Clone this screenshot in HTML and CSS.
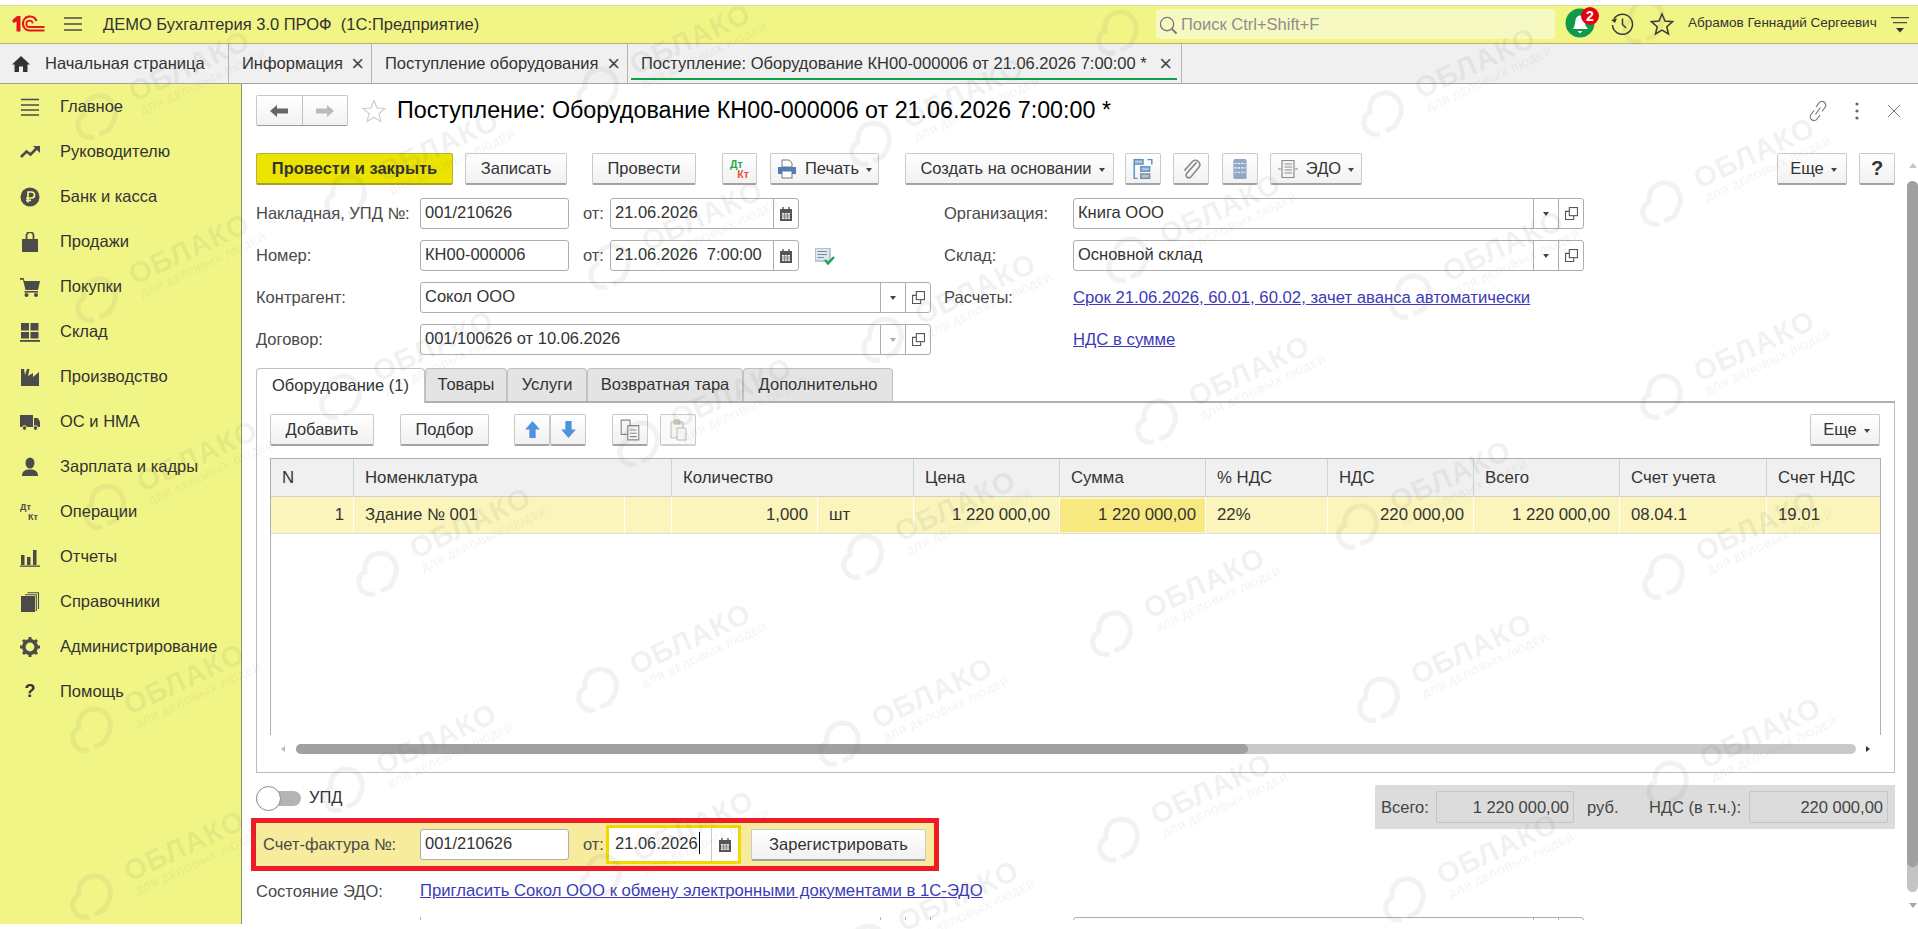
FILE: index.html
```html
<!DOCTYPE html>
<html lang="ru">
<head>
  <meta charset="UTF-8" />
  <meta name="viewport" content="width=device-width, initial-scale=1.0" />
  <title>ДЕМО Бухгалтерия 3.0 ПРОФ</title>
  <link rel="stylesheet" href="styles.css">
</head>

<body>
  <header class="topbar">
    <svg class="logo" viewBox="0 0 34 17" fill="none" stroke="#e8161b">
      <path d="M1 5.5 L6 1 H9.5 V16.5 H5.5 V6.5 L2.5 8 Z" fill="#e8161b" stroke="none" />
      <path d="M33.5 15.5 H18.5 A7 7 0 1 1 25.5 6" stroke-width="2.2" />
      <path d="M33.5 12 H18.5 A3.2 3.2 0 1 1 21.7 8.3" stroke-width="1.8" />
    </svg>
    <svg class="burger" viewBox="0 0 18 14" stroke="#4b4b4b" stroke-width="1.4">
      <path d="M0 1 H18 M0 7 H18 M0 13 H18" />
    </svg>
    <span class="app-title">ДЕМО Бухгалтерия 3.0 ПРОФ&nbsp; (1С:Предприятие)</span>
    <div class="search">
      <svg class="search-icon" viewBox="0 0 20 20" fill="none" stroke="#777" stroke-width="1.4">
        <circle cx="8.5" cy="8.5" r="7" />
        <path d="M13.5 13.5 L18.5 18.5" stroke-width="2" />
      </svg>
      <span>Поиск Ctrl+Shift+F</span>
    </div>
    <div class="bell">
      <svg viewBox="0 0 30 30">
        <circle cx="15" cy="15" r="14.5" fill="#0e9a48" />
        <path d="M8 21 C10 18 10 15 10.5 12 C11 9 13 7.5 15 7.5 C17 7.5 19 9 19.5 12 C20 15 20 18 23 21 Z" fill="#fff" />
        <path d="M12.5 23 H17.5 L15 25.5 Z" fill="#fff" />
      </svg>
      <span class="badge">2</span>
    </div>
    <svg class="top-icon history" viewBox="0 0 24 24" fill="none" stroke="#3a3a3a" stroke-width="1.5">
      <path d="M4 7 A10 10 0 1 1 2.5 13" />
      <path d="M1 8 L5 11 L7 6.5 Z" fill="#3a3a3a" stroke="none" />
      <path d="M12.5 6.5 V12.5 L16 16" />
    </svg>
    <svg class="top-icon fav" viewBox="0 0 24 24" fill="none" stroke="#3a3a3a" stroke-width="1.5">
      <path d="M12 2 L15 9 L22.5 9.7 L16.8 14.7 L18.5 22 L12 18.2 L5.5 22 L7.2 14.7 L1.5 9.7 L9 9 Z" />
    </svg>
    <span class="user-name">Абрамов Геннадий Сергеевич</span>
    <svg class="user-menu" viewBox="0 0 18 16">
      <path d="M0 .6 H18 M2 5.6 H16" stroke="#4b4b4b" stroke-width="1.2" />
      <path d="M5 11 H13 L9 15.5 Z" fill="#333" />
    </svg>
  </header>

  <nav class="tabsbar">
    <div class="page-tab home-tab">
      <svg class="home-icon" viewBox="0 0 18 16"><path d="M9 0 L18 8.5 H15.5 V16 H11 V10.5 H7 V16 H2.5 V8.5 H0 Z" fill="#333" /></svg>
      <span>Начальная страница</span>
    </div>
    <div class="page-tab info-tab"><span>Информация</span><i class="tab-close">×</i></div>
    <div class="page-tab list-tab"><span>Поступление оборудования</span><i class="tab-close">×</i></div>
    <div class="page-tab doc-tab active"><span>Поступление: Оборудование КН00-000006 от 21.06.2026 7:00:00 *</span><i class="tab-close">×</i></div>
  </nav>

  <div class="layout">
    <aside class="sidebar">
      <a class="nav-item">
        <svg viewBox="0 0 20 20" stroke="#4b4b4b" stroke-width="1.5"><path d="M1 2.5 H19 M1 8 H19 M1 13 H19 M1 18 H19" /></svg>
        Главное
      </a>
      <a class="nav-item">
        <svg viewBox="0 0 20 20" fill="none" stroke="#4b4b4b" stroke-width="2.6"><path d="M1 15 L6.5 9.5 L10.5 12.5 L17 6" /><path d="M13 4 H20 V11 Z" fill="#4b4b4b" stroke="none" /></svg>
        Руководителю
      </a>
      <a class="nav-item">
        <svg viewBox="0 0 20 20"><circle cx="10" cy="10" r="9.5" fill="#4b4b4b" /><path d="M8 15.5 V5 H11.5 A3 3 0 0 1 11.5 11 H6 M6 13.3 H11" fill="none" stroke="#f1f585" stroke-width="1.7" /></svg>
        Банк и касса
      </a>
      <a class="nav-item">
        <svg viewBox="0 0 20 20"><path d="M2 7 H18 V20 H2 Z" fill="#4b4b4b" /><path d="M6.5 9 V3.5 A3.5 3.5 0 0 1 13.5 3.5 V9" fill="none" stroke="#4b4b4b" stroke-width="1.8" /></svg>
        Продажи
      </a>
      <a class="nav-item">
        <svg viewBox="0 0 20 20"><path d="M0 1 H3.5 L4.5 4 H20 L18 13 H5.5 L3 2.8 H0 Z" fill="#4b4b4b" /><rect x="4.5" y="14" width="13.5" height="1.6" fill="#4b4b4b" /><circle cx="6.5" cy="18" r="2" fill="#4b4b4b" /><circle cx="16" cy="18" r="2" fill="#4b4b4b" /></svg>
        Покупки
      </a>
      <a class="nav-item">
        <svg viewBox="0 0 20 20" fill="#4b4b4b"><rect x="1" y="1" width="8" height="7.5" /><rect x="10.5" y="1" width="8" height="7.5" /><rect x="1" y="10" width="8" height="6.5" /><rect x="10.5" y="10" width="8" height="6.5" /><rect x="0" y="18" width="20" height="1.8" /></svg>
        Склад
      </a>
      <a class="nav-item">
        <svg viewBox="0 0 20 20"><path d="M1 19 V2 H4 L5 8 L7 2 H9.5 L8 9 L13 6 V10 L19 5 V19 Z" fill="#4b4b4b" /></svg>
        Производство
      </a>
      <a class="nav-item">
        <svg viewBox="0 0 20 20"><path d="M0 3 H13 V15 H0 Z M14 6 H18 L20 10 V15 H14 Z" fill="#4b4b4b" /><circle cx="4.5" cy="16" r="2.3" fill="#4b4b4b" stroke="#f1f585" /><circle cx="15.5" cy="16" r="2.3" fill="#4b4b4b" stroke="#f1f585" /></svg>
        ОС и НМА
      </a>
      <a class="nav-item">
        <svg viewBox="0 0 20 20" fill="#4b4b4b"><ellipse cx="10" cy="6" rx="4.5" ry="5.5" /><path d="M2 19 C2 14 5 12.5 10 12.5 C15 12.5 18 14 18 19 Z" /></svg>
        Зарплата и кадры
      </a>
      <a class="nav-item">
        <svg viewBox="0 0 20 20" fill="#4b4b4b" font-family="Liberation Sans, sans-serif" font-weight="700" font-size="9"><text x="0" y="8">Дт</text><text x="8" y="18">Кт</text></svg>
        Операции
      </a>
      <a class="nav-item">
        <svg viewBox="0 0 20 20" fill="#4b4b4b"><rect x="1" y="8" width="3.5" height="10" /><rect x="7" y="10" width="3.5" height="8" /><rect x="13" y="3" width="3.5" height="15" /><rect x="0" y="18.5" width="20" height="1.3" /></svg>
        Отчеты
      </a>
      <a class="nav-item">
        <svg viewBox="0 0 20 20"><rect x="1" y="4" width="14" height="16" fill="#4b4b4b" /><path d="M16.3 19 V2.8 H5 M18.5 17 V.8 H7.5" fill="none" stroke="#4b4b4b" stroke-width="1.1" /></svg>
        Справочники
      </a>
      <a class="nav-item">
        <svg viewBox="0 0 20 20"><circle cx="10" cy="10" r="6.2" fill="none" stroke="#4b4b4b" stroke-width="3.6" /><path d="M10 0 V20 M0 10 H20 M3 3 L17 17 M17 3 L3 17" stroke="#4b4b4b" stroke-width="3" stroke-dasharray="3.5 13 3.5 13" /></svg>
        Администрирование
      </a>
      <a class="nav-item">
        <span class="help-mark">?</span>
        Помощь
      </a>
    </aside>

    <main class="content">
      <div class="form">
        <div class="form-head">
          <div class="nav-btns">
            <span class="nav-btn">
              <svg viewBox="0 0 18 12"><path d="M0 6 L7 0 V3.5 H18 V8.5 H7 V12 Z" fill="#666" /></svg>
            </span>
            <span class="nav-btn">
              <svg viewBox="0 0 18 12"><path d="M18 6 L11 0 V3.5 H0 V8.5 H11 V12 Z" fill="#bbb" /></svg>
            </span>
          </div>
          <svg class="title-star" viewBox="0 0 24 24" fill="#fff" stroke="#ccc" stroke-width="1.2"><path d="M12 1.5 L15 9 L23 9.6 L17 14.6 L18.8 22.5 L12 18.3 L5.2 22.5 L7 14.6 L1 9.6 L9 9 Z" /></svg>
          <h1 class="form-title">Поступление: Оборудование КН00-000006 от 21.06.2026 7:00:00 *</h1>
          <div class="head-tools">
            <svg viewBox="0 0 20 24" fill="none" stroke="#777" stroke-width="1.2"><path d="M8 8 L11 4 A3.5 3.5 0 0 1 17 8.5 L14 12.5 M12 16 L9 20 A3.5 3.5 0 0 1 3 15.5 L6 11.5 M7.5 15.5 L12.5 8.5" /></svg>
            <svg viewBox="0 0 4 18" fill="#666"><circle cx="2" cy="2" r="1.6" /><circle cx="2" cy="9" r="1.6" /><circle cx="2" cy="16" r="1.6" /></svg>
            <svg viewBox="0 0 14 14" stroke="#777" stroke-width="1"><path d="M1 1 L13 13 M13 1 L1 13" /></svg>
          </div>
        </div>

        <div class="command-bar">
          <button class="btn btn-primary w-197">Провести и закрыть</button>
          <button class="btn w-102 ml-12">Записать</button>
          <button class="btn w-104 ml-25">Провести</button>
          <button class="btn btn-icon ml-26">
            <svg viewBox="0 0 24 24" font-family="Liberation Sans, sans-serif" font-weight="700" font-size="11.5"><text x="1" y="11" fill="#2aa84a">Дт</text><text x="9" y="22" fill="#e8503a">Кт</text></svg>
          </button>
          <button class="btn w-109 ml-13">
            <svg class="btn-svg" viewBox="0 0 20 20"><path d="M5 1 H12 L15 4 V8 H5 Z" fill="#fff" stroke="#777" /><rect x="1" y="8" width="18" height="7" fill="#4a7fc0" /><rect x="5" y="12" width="10" height="7" fill="#fff" stroke="#777" /></svg>
            Печать <i class="caret"></i>
          </button>
          <button class="btn btn-base w-209 ml-26">Создать на основании <i class="caret"></i></button>
          <button class="btn btn-icon w-36 ml-11">
            <svg viewBox="0 0 20 20" fill="none" stroke="#5a8fc4" stroke-width="1.3"><rect x="2" y="1.5" width="8" height="4" fill="#a9c6e4" /><rect x="8" y="8" width="8" height="4" fill="#a9c6e4" /><rect x="8" y="14.5" width="8" height="4" fill="#a9c6e4" stroke="#888" /><path d="M2 5.5 V18.5 H5 M14 1.5 H18 V6" /></svg>
          </button>
          <button class="btn btn-icon w-36 ml-12">
            <svg viewBox="0 0 20 20" fill="none" stroke="#8a8a8a" stroke-width="1.5"><path d="M15 4 L6 14 A2.4 2.4 0 0 0 10 17 L17.5 8 A4 4 0 0 0 11.5 3 L4 11.5" /></svg>
          </button>
          <button class="btn btn-icon w-36 ml-13">
            <svg viewBox="0 0 20 20"><rect x="4" y="1" width="12" height="18" rx="1.5" fill="#8fa9c6" /><path d="M5 5 H15 M5 9 H15 M5 13 H15" stroke="#fff" stroke-width="1" stroke-dasharray="2 1" /></svg>
          </button>
          <button class="btn w-92 ml-12">
            <svg class="btn-svg" viewBox="0 0 20 20" fill="none" stroke="#8a8a8a" stroke-width="1.2"><path d="M4 1.5 H16 V18.5 H4 Z" fill="#f4f4f4" /><path d="M6.5 5 H14 M6.5 8 H14 M6.5 11 H14 M6.5 14 H14 M0 10 H3 M17 10 H20" /></svg>
            ЭДО <i class="caret"></i>
          </button>
          <button class="btn btn-more w-70 ml-auto">Еще <i class="caret"></i></button>
          <button class="btn w-36 ml-12 help-btn">?</button>
        </div>

        <div class="row first-row">
          <div class="col-left">
            <label class="label">Накладная, УПД №:</label>
            <div class="field w-149">001/210626</div>
            <label class="from">от:</label>
            <div class="field w-189">
              <span class="field-text">21.06.2026</span>
              <span class="field-btn w-cal"><svg class="cal" viewBox="0 0 12 14"><path d="M0 2 H12 V14 H0 Z" fill="#555" /><path d="M3 0 V3 M9 0 V3" stroke="#555" stroke-width="1.4" /><path d="M2 6 H10 V12 H2 Z" fill="#eee" /><path d="M2 8 H10 M2 10 H10 M4.6 6 V12 M7.3 6 V12" stroke="#666" stroke-width=".7" /></svg></span>
            </div>
          </div>
          <label class="label label-right">Организация:</label>
          <div class="field w-511">
            <span class="field-text">Книга ООО</span>
            <span class="field-btn w-drop"><i class="caret"></i></span>
            <span class="field-btn w-open"><svg class="open" viewBox="0 0 12 12" fill="#fff" stroke="#555"><rect x="4" y=".5" width="7.5" height="7.5" /><path d="M4 4 H.5 V11.5 H8 V8" fill="none" /></svg></span>
          </div>
        </div>

        <div class="row">
          <div class="col-left">
            <label class="label">Номер:</label>
            <div class="field w-149">КН00-000006</div>
            <label class="from">от:</label>
            <div class="field w-189">
              <span class="field-text">21.06.2026&nbsp; 7:00:00</span>
              <span class="field-btn w-cal"><svg class="cal" viewBox="0 0 12 14"><path d="M0 2 H12 V14 H0 Z" fill="#555" /><path d="M3 0 V3 M9 0 V3" stroke="#555" stroke-width="1.4" /><path d="M2 6 H10 V12 H2 Z" fill="#eee" /><path d="M2 8 H10 M2 10 H10 M4.6 6 V12 M7.3 6 V12" stroke="#666" stroke-width=".7" /></svg></span>
            </div>
            <svg class="doc-ok" viewBox="0 0 20 18"><rect x="0" y="0" width="15" height="13" fill="#dfe7ee" stroke="#8aa0b5" /><path d="M2.5 3.5 H12 M2.5 6.5 H12 M2.5 9.5 H9" stroke="#7b8c9c" /><path d="M10 12 L13 15.5 L19 9" fill="none" stroke="#1f9e4a" stroke-width="2.2" /></svg>
          </div>
          <label class="label label-right">Склад:</label>
          <div class="field w-511">
            <span class="field-text">Основной склад</span>
            <span class="field-btn w-drop"><i class="caret"></i></span>
            <span class="field-btn w-open"><svg class="open" viewBox="0 0 12 12" fill="#fff" stroke="#555"><rect x="4" y=".5" width="7.5" height="7.5" /><path d="M4 4 H.5 V11.5 H8 V8" fill="none" /></svg></span>
          </div>
        </div>

        <div class="row">
          <div class="col-left">
            <label class="label">Контрагент:</label>
            <div class="field w-511">
              <span class="field-text">Сокол ООО</span>
              <span class="field-btn w-drop"><i class="caret"></i></span>
              <span class="field-btn w-open"><svg class="open" viewBox="0 0 12 12" fill="#fff" stroke="#555"><rect x="4" y=".5" width="7.5" height="7.5" /><path d="M4 4 H.5 V11.5 H8 V8" fill="none" /></svg></span>
            </div>
          </div>
          <label class="label label-right">Расчеты:</label>
          <a class="link">Срок 21.06.2026, 60.01, 60.02, зачет аванса автоматически</a>
        </div>

        <div class="row">
          <div class="col-left">
            <label class="label">Договор:</label>
            <div class="field w-511">
              <span class="field-text">001/100626 от 10.06.2026</span>
              <span class="field-btn w-drop"><i class="caret caret-light"></i></span>
              <span class="field-btn w-open"><svg class="open" viewBox="0 0 12 12" fill="#fff" stroke="#555"><rect x="4" y=".5" width="7.5" height="7.5" /><path d="M4 4 H.5 V11.5 H8 V8" fill="none" /></svg></span>
            </div>
          </div>
          <label class="label label-right"></label>
          <a class="link">НДС в сумме</a>
        </div>

        <div class="tabs">
          <span class="tab tab-active w-169">Оборудование (1)</span>
          <span class="tab w-82">Товары</span>
          <span class="tab w-80">Услуги</span>
          <span class="tab w-156">Возвратная тара</span>
          <span class="tab w-150">Дополнительно</span>
        </div>

        <section class="panel">
          <div class="panel-bar">
            <button class="btn w-104">Добавить</button>
            <button class="btn w-89 ml-26">Подбор</button>
            <div class="btn-pair ml-25">
              <button class="btn btn-icon btn-arrow w-36">
                <svg viewBox="0 0 16 18"><path d="M8 1 L15 9 H11 V17 H5 V9 H1 Z" fill="#4f93db" /></svg>
              </button>
              <button class="btn btn-icon btn-arrow w-36">
                <svg viewBox="0 0 16 18"><path d="M8 17 L15 9 H11 V1 H5 V9 H1 Z" fill="#4f93db" /></svg>
              </button>
            </div>
            <button class="btn btn-icon w-36 ml-26">
              <svg viewBox="0 0 20 20" fill="#f4f4f4" stroke="#888"><path d="M2 1 H10 V14 H2 Z" /><path d="M8 6 H18 V19 H8 Z" /><path d="M10 10 H16 M10 13 H16 M10 16 H16" /></svg>
            </button>
            <button class="btn btn-icon btn-off w-36 ml-12">
              <svg viewBox="0 0 20 22" fill="#f4f4f4" stroke="#bbb"><path d="M3 3 H15 V19 H3 Z" /><path d="M6 1 H12 V5 H6 Z" fill="#e0cfa0" /><path d="M9 9 H18 V21 H9 Z" /></svg>
            </button>
            <button class="btn btn-more w-70 ml-auto">Еще <i class="caret"></i></button>
          </div>

          <div class="table-wrap">
            <table class="items">
              <colgroup>
                <col class="c-n"><col class="c-name"><col class="c-sub"><col class="c-qty"><col class="c-unit">
                <col class="c-sum"><col class="c-sum"><col class="c-vat"><col class="c-sum"><col class="c-sum">
                <col class="c-acc"><col class="c-last">
              </colgroup>
              <thead>
                <tr>
                  <th>N</th>
                  <th colspan="2">Номенклатура</th>
                  <th colspan="2">Количество</th>
                  <th>Цена</th>
                  <th>Сумма</th>
                  <th>% НДС</th>
                  <th>НДС</th>
                  <th>Всего</th>
                  <th>Счет учета</th>
                  <th>Счет НДС</th>
                </tr>
              </thead>
              <tbody>
                <tr>
                  <td class="num">1</td>
                  <td>Здание № 001</td>
                  <td></td>
                  <td class="num">1,000</td>
                  <td>шт</td>
                  <td class="num">1 220 000,00</td>
                  <td class="num current">1 220 000,00</td>
                  <td>22%</td>
                  <td class="num">220 000,00</td>
                  <td class="num">1 220 000,00</td>
                  <td>08.04.1</td>
                  <td>19.01</td>
                </tr>
              </tbody>
            </table>
          </div>

          <div class="hscroll">
            <i class="arrow-left"></i>
            <div class="hscroll-track"><div class="hscroll-thumb"></div></div>
            <i class="arrow-right"></i>
          </div>
        </section>

        <div class="bottom">
          <div class="bottom-left">
            <div class="toggle-row">
              <span class="toggle"><i class="knob"></i></span>
              <span class="toggle-text">УПД</span>
            </div>
            <div class="invoice">
              <label class="label invoice-label">Счет-фактура №:</label>
              <div class="field w-149">001/210626</div>
              <label class="from">от:</label>
              <div class="date-focus">
                <span class="date-text">21.06.2026<i class="text-caret"></i></span>
                <span class="field-btn w-cal"><svg class="cal" viewBox="0 0 12 14"><path d="M0 2 H12 V14 H0 Z" fill="#555" /><path d="M3 0 V3 M9 0 V3" stroke="#555" stroke-width="1.4" /><path d="M2 6 H10 V12 H2 Z" fill="#eee" /><path d="M2 8 H10 M2 10 H10 M4.6 6 V12 M7.3 6 V12" stroke="#666" stroke-width=".7" /></svg></span>
              </div>
              <button class="btn w-175 ml-10">Зарегистрировать</button>
            </div>
          </div>
          <div class="totals">
            <span class="total-label">Всего:</span>
            <span class="total-box w-138">1 220 000,00</span>
            <span class="total-unit">руб.</span>
            <span class="total-label w-100">НДС (в т.ч.):</span>
            <span class="total-box w-139">220 000,00</span>
          </div>
        </div>

        <div class="edo-row">
          <label class="label">Состояние ЭДО:</label>
          <a class="link">Пригласить Сокол ООО к обмену электронными документами в 1С-ЭДО</a>
        </div>

        <div class="cut-row">
          <div class="col-left">
            <span class="label"></span>
            <div class="field w-511">
              <span class="field-text"></span>
              <span class="field-btn w-drop"></span>
              <span class="field-btn w-open"></span>
            </div>
          </div>
          <span class="label label-right"></span>
          <div class="field w-511">
            <span class="field-text"></span>
            <span class="field-btn w-drop"></span>
            <span class="field-btn w-open"></span>
          </div>
        </div>
      </div>

      <div class="vscroll">
        <i class="arrow-up"></i>
        <div class="vscroll-track"><div class="vscroll-thumb"></div></div>
        <i class="arrow-down"></i>
      </div>
    </main>
  </div>

  <div id="watermarks"></div>
  <script src="script.js"></script>
</body>
</html>
```

FILE: styles.css
```css
* {
  box-sizing: border-box;
  font-family: 'Liberation Sans', Arial, sans-serif;
}

html,
body {
  height: 100%;
}

body {
  margin: 0;
  height: 929px;
  overflow: hidden;
  background-color: #fff;
  color: #333;
  font-size: 16.5px;
  border-top: 5px solid #fff;
  position: relative;
}

/* Верхняя панель */
.topbar {
  height: 39px;
  display: flex;
  align-items: center;
  background-color: #f1f585;
  border-top: 1px solid #dcdca0;
  border-bottom: 1px solid #b8b46c;
}

.logo {
  width: 34px;
  height: 17px;
  margin-left: 11px;
  margin-top: -3px;
}

.burger {
  width: 18px;
  height: 14px;
  margin-left: 19px;
  margin-top: -1px;
}

.app-title {
  margin-left: 21px;
  white-space: nowrap;
  font-size: 16.5px;
}

.search {
  position: absolute;
  left: 1156px;
  top: 4px;
  width: 399px;
  height: 30px;
  display: flex;
  align-items: center;
  background-color: #f7f9c3;
  border-radius: 3px;
  color: #8e8e8e;
}

.search-icon {
  width: 19px;
  height: 19px;
  margin: 3px 3px 0 3px;
}

.bell {
  position: absolute;
  left: 1565px;
  top: 3px;
  width: 30px;
  height: 30px;
}

.bell svg {
  display: block;
}

.badge {
  position: absolute;
  left: 16px;
  top: -1px;
  width: 18px;
  height: 18px;
  border-radius: 50%;
  background-color: #e60012;
  color: #fff;
  font-size: 14px;
  font-weight: 700;
  line-height: 18px;
  text-align: center;
}

.top-icon {
  position: absolute;
  top: 7px;
  width: 24px;
  height: 24px;
}

.history {
  left: 1610px;
}

.fav {
  left: 1650px;
}

.user-name {
  position: absolute;
  left: 1688px;
  top: 10px;
  font-size: 13.5px;
  white-space: nowrap;
}

.user-menu {
  position: absolute;
  left: 1891px;
  top: 12px;
  width: 18px;
  height: 16px;
}

/* Вкладки страниц */
.tabsbar {
  height: 40px;
  display: flex;
  background-color: #f0f0f0;
  border-bottom: 1px solid #a3a3a3;
}

.page-tab {
  position: relative;
  display: flex;
  align-items: center;
  height: 39px;
  padding-left: 13px;
  border-right: 1px solid #b5b5b5;
  white-space: nowrap;
  flex: none;
}

.home-tab {
  width: 229px;
  padding-left: 12px;
}

.home-icon {
  width: 18px;
  height: 16px;
  margin-right: 15px;
}

.info-tab {
  width: 143px;
}

.list-tab {
  width: 256px;
}

.doc-tab {
  width: 554px;
}

.page-tab.active::after {
  content: "";
  position: absolute;
  left: 3px;
  right: 4px;
  bottom: 3px;
  height: 2px;
  background-color: #0f9d49;
}

.tab-close {
  position: absolute;
  right: 7px;
  font-style: normal;
  font-size: 22px;
  line-height: 22px;
  color: #444;
}

.doc-tab .tab-close {
  right: 9px;
}

.page-tab span {
  margin-top: -1px;
}

/* Раскладка */
.layout {
  display: flex;
  height: 840px;
}

.sidebar {
  width: 242px;
  flex: none;
  background-color: #f1f585;
  border-right: 1px solid #8f8f6c;
}

.nav-item {
  display: flex;
  align-items: center;
  height: 45px;
  padding-left: 20px;
  color: #333;
  white-space: nowrap;
}

.nav-item svg {
  width: 20px;
  height: 20px;
  margin-right: 20px;
  flex: none;
}

.help-mark {
  width: 20px;
  margin-right: 20px;
  text-align: center;
  font-weight: 700;
  font-size: 18px;
}

.content {
  flex: 1;
  display: flex;
  min-width: 0;
}

.form {
  flex: 1;
  min-width: 0;
  height: 836px;
  overflow: hidden;
  padding: 11px 12px 0 14px;
}

/* Заголовок формы */
.form-head {
  display: flex;
  align-items: center;
  height: 31px;
}

.nav-btns {
  display: flex;
  width: 92px;
  height: 31px;
  border: 1px solid #c8c8c8;
  border-bottom-color: #9c9c9c;
  border-radius: 2px;
  background: linear-gradient(#fff, #f2f2f2);
}

.nav-btn {
  flex: 1;
  display: flex;
  align-items: center;
  justify-content: center;
}

.nav-btn:first-child {
  border-right: 1px solid #c0c0c0;
}

.nav-btn svg {
  width: 18px;
  height: 12px;
}

.title-star {
  width: 24px;
  height: 24px;
  margin-left: 14px;
}

.form-title {
  margin: 0 0 0 11px;
  font-size: 23.3px;
  font-weight: 400;
  color: #000;
  white-space: nowrap;
}

.head-tools {
  margin-left: auto;
  display: flex;
  align-items: center;
  margin-right: -6px;
}

.head-tools svg:nth-child(1) {
  width: 20px;
  height: 24px;
}

.head-tools svg:nth-child(2) {
  width: 4px;
  height: 18px;
  margin-left: 27px;
}

.head-tools svg:nth-child(3) {
  width: 14px;
  height: 14px;
  margin-left: 28px;
}

/* Кнопки */
.command-bar {
  display: flex;
  height: 32px;
  margin-top: 27px;
}

.btn {
  height: 32px;
  padding: 0;
  flex: none;
  display: inline-flex;
  align-items: center;
  justify-content: center;
  background: linear-gradient(#fff, #f1f1f1);
  border: 1px solid #c9c9c9;
  border-bottom: 2px solid #a3a3a3;
  border-radius: 2px;
  color: #333;
  font-size: 16.5px;
  white-space: nowrap;
}

.btn-primary {
  background: #ebe300;
  border-color: #b9b23a;
  border-bottom-color: #a8a220;
  font-weight: 700;
}

.btn-base {
  padding-left: 6px;
}

.btn-more {
  padding-left: 3px;
}

.btn-icon {
  width: 35px;
}

.btn-icon svg {
  width: 22px;
  height: 22px;
}

.btn-icon.btn-arrow svg {
  width: 17px;
  height: 19px;
}

.btn-off {
  border-bottom-color: #cfcfcf;
  background: #fafafa;
}

.btn-svg {
  width: 20px;
  height: 20px;
  margin-right: 8px;
}

.help-btn {
  font-weight: 700;
  font-size: 20px;
}

.caret {
  display: inline-block;
  width: 0;
  height: 0;
  margin-left: 7px;
  margin-top: 2px;
  border-left: 3.5px solid transparent;
  border-right: 3.5px solid transparent;
  border-top: 4px solid #444;
}

.caret-light {
  border-top-color: #a8a8a8;
}

.w-36 { width: 36px; }
.w-70 { width: 70px; }
.w-89 { width: 89px; }
.w-92 { width: 92px; }
.w-102 { width: 102px; }
.w-104 { width: 104px; }
.w-109 { width: 109px; }
.w-149 { width: 149px; }
.w-175 { width: 175px; }
.w-189 { width: 189px; }
.w-197 { width: 197px; }
.w-209 { width: 209px; }
.w-511 { width: 511px; }

.ml-10 { margin-left: 10px; }
.ml-11 { margin-left: 11px; }
.ml-12 { margin-left: 12px; }
.ml-13 { margin-left: 13px; }
.ml-25 { margin-left: 25px; }
.ml-26 { margin-left: 26px; }
.ml-auto { margin-left: auto; }

/* Поля шапки */
.row {
  display: flex;
  align-items: center;
  height: 31px;
  margin-top: 11px;
}

.first-row {
  margin-top: 13px;
}

.col-left {
  display: flex;
  align-items: center;
  width: 688px;
  flex: none;
}

.label {
  width: 164px;
  flex: none;
  color: #4a4a4a;
  white-space: nowrap;
}

.label-right {
  width: 129px;
}

.row .label {
  margin-top: -1px;
}

.from {
  width: 27px;
  margin-left: 14px;
  flex: none;
  color: #4a4a4a;
}

.field {
  height: 31px;
  flex: none;
  display: flex;
  align-items: stretch;
  padding-left: 4px;
  line-height: 26px;
  background-color: #fff;
  border: 1px solid #aeaeae;
  border-radius: 3px;
  white-space: nowrap;
  color: #333;
}

.field-text {
  flex: 1;
  min-width: 0;
}

.field-btn {
  display: flex;
  align-items: center;
  justify-content: center;
  flex: none;
  border-left: 1px solid #aeaeae;
}

.w-cal {
  width: 25px;
}

.w-drop {
  width: 25px;
}

.w-drop .caret {
  margin: 0;
}

.w-open {
  width: 25px;
}

.cal {
  width: 12px;
  height: 14px;
}

.open {
  width: 13px;
  height: 13px;
}

.doc-ok {
  width: 20px;
  height: 18px;
  margin-left: 16px;
  margin-top: 2px;
}

.link {
  color: #3b3bb8;
  font-size: 16.7px;
  text-decoration: underline;
  white-space: nowrap;
}

/* Закладки */
.tabs {
  display: flex;
  align-items: flex-end;
  height: 35px;
  margin-top: 13px;
  border-bottom: 2px solid #b0b0b0;
}

.tab {
  height: 33px;
  display: flex;
  align-items: center;
  justify-content: center;
  flex: none;
  padding-bottom: 2px;
  background-color: #e4e4e4;
  border: 1px solid #c0c0c0;
  border-bottom: none;
  border-radius: 4px 4px 0 0;
  white-space: nowrap;
}

.tab-active {
  height: 35px;
  margin-bottom: -2px;
  background-color: #fff;
  position: relative;
}

.w-169 { width: 169px; }
.w-82 { width: 82px; }
.w-80 { width: 80px; }
.w-156 { width: 156px; }
.w-150 { width: 150px; }

.panel {
  height: 370px;
  padding: 11px 14px 0 13px;
  border: 1px solid #bdbdbd;
  border-top: none;
}

.panel-bar {
  display: flex;
  height: 32px;
}

.btn-pair {
  display: flex;
}

/* Таблица */
.table-wrap {
  height: 277px;
  margin-top: 12px;
  border: 1px solid #b0b0b0;
  border-bottom: none;
  width: 1611px;
}

.items {
  width: 1609px;
  table-layout: fixed;
  border-collapse: separate;
  border-spacing: 0;
  font-size: 16.8px;
}

.c-n { width: 83px; }
.c-name { width: 271px; }
.c-sub { width: 47px; }
.c-qty { width: 146px; }
.c-unit { width: 96px; }
.c-sum { width: 146px; }
.c-vat { width: 122px; }
.c-acc { width: 147px; }
.c-last { width: 113px; }

.items th {
  height: 38px;
  padding: 0 10px 0 11px;
  background-color: #f0f0f0;
  border-right: 1px solid #d2d2d2;
  border-bottom: 1px solid #cfcfcf;
  font-weight: 400;
  text-align: left;
  white-space: nowrap;
}

.items td {
  height: 37px;
  padding: 0 9px 0 11px;
  background-color: #fbf5bb;
  border-right: 1px solid #fff;
  border-bottom: 1px solid #e0e0e0;
  white-space: nowrap;
}

.items th:last-child,
.items td:last-child {
  border-right: none;
}

.items .num {
  text-align: right;
}

.items .current {
  background-color: #f7e97f;
  box-shadow: inset 0 2px 0 #fbf5bb, inset 0 -1px 0 #fbf5bb;
}

.hscroll {
  display: flex;
  align-items: center;
  height: 10px;
  margin-top: 9px;
  padding-left: 11px;
}

.hscroll-track {
  margin-left: 11px;
  width: 1560px;
  height: 10px;
  border-radius: 5px;
  background-color: #c9c9c9;
}

.hscroll-thumb {
  width: 952px;
  height: 10px;
  border-radius: 5px;
  background-color: #a0a0a0;
}

.arrow-left {
  width: 0;
  height: 0;
  border-top: 3.5px solid transparent;
  border-bottom: 3.5px solid transparent;
  border-right: 4px solid #bbb;
}

.arrow-right {
  width: 0;
  height: 0;
  margin-left: 10px;
  border-top: 3.5px solid transparent;
  border-bottom: 3.5px solid transparent;
  border-left: 4px solid #333;
}

/* Низ формы */
.bottom {
  display: flex;
  margin-top: 12px;
}

.bottom-left {
  width: 683px;
  flex: none;
}

.toggle-row {
  display: flex;
  align-items: center;
  gap: 8px;
  height: 26px;
  margin-bottom: 7px;
}

.toggle-text {
  margin-top: -2px;
}

.toggle {
  position: relative;
  width: 45px;
  height: 15px;
  border-radius: 8px;
  background-color: #b4b4b4;
}

.knob {
  position: absolute;
  left: 0;
  top: -5px;
  width: 25px;
  height: 25px;
  border-radius: 50%;
  background-color: #fff;
  border: 1px solid #8a8a8a;
}

.invoice {
  display: flex;
  align-items: center;
  width: 688px;
  height: 53px;
  margin-left: -5px;
  padding-left: 7px;
  background-color: #f7ec9e;
  border: 5px solid #ee1c25;
}

.invoice-label {
  width: 157px;
}

.date-focus {
  display: flex;
  width: 135px;
  height: 39px;
  margin-left: -4px;
  background-color: #fff;
  border: 3px solid #f0d800;
  line-height: 31px;
}

.date-text {
  flex: 1;
  padding-left: 6px;
}

.date-focus .field-btn {
  width: 27px;
  border-left: 1px solid #c8c8c8;
}

.text-caret {
  display: inline-block;
  width: 1px;
  height: 22px;
  margin-left: 1px;
  vertical-align: -5px;
  background-color: #000;
}

.totals {
  display: flex;
  align-items: center;
  width: 520px;
  height: 44px;
  margin-left: auto;
  padding-left: 6px;
  background-color: #dcdcdc;
  color: #444;
}

.total-label {
  width: 55px;
  flex: none;
}

.total-label.w-100 {
  width: 100px;
}

.total-box {
  height: 32px;
  flex: none;
  line-height: 30px;
  padding-right: 4px;
  text-align: right;
  border: 1px solid #c4c4c4;
  border-radius: 2px;
}

.w-138 { width: 138px; }
.w-139 { width: 139px; }

.total-unit {
  width: 62px;
  margin-left: 13px;
  flex: none;
}

.edo-row {
  display: flex;
  align-items: center;
  height: 20px;
  margin-top: 10px;
}

.cut-row {
  display: flex;
  margin-top: 16px;
  height: 3px;
  overflow: hidden;
}

/* Вертикальная прокрутка */
.vscroll {
  width: 11px;
  flex: none;
  display: flex;
  flex-direction: column;
  align-items: center;
  padding-top: 79px;
}

.vscroll-track {
  width: 11px;
  height: 711px;
  margin-top: 13px;
  border-radius: 6px;
  background-color: #c4c4c4;
  flex: none;
}

.vscroll-thumb {
  width: 11px;
  height: 686px;
  border-radius: 6px;
  background-color: #a0a0a0;
}

.arrow-up {
  width: 0;
  height: 0;
  border-left: 4px solid transparent;
  border-right: 4px solid transparent;
  border-bottom: 5px solid #c4c4c4;
}

.arrow-down {
  width: 0;
  height: 0;
  margin-top: 11px;
  border-left: 4px solid transparent;
  border-right: 4px solid transparent;
  border-top: 5px solid #a8a8a8;
}

/* Водяные знаки */
#watermarks {
  position: absolute;
  left: 0;
  top: -5px;
  width: 1918px;
  height: 929px;
  overflow: hidden;
  pointer-events: none;
}

.wm {
  position: absolute;
  width: 0;
  height: 0;
  transform: rotate(-25deg);
  transform-origin: 0 0;
  white-space: nowrap;
}

.wm-title {
  position: absolute;
  left: -55px;
  top: -17px;
  font-size: 29px;
  line-height: 34px;
  font-weight: 700;
  letter-spacing: 1px;
  color: rgba(110, 110, 110, 0.09);
}

.wm-sub {
  position: absolute;
  left: -53px;
  top: 14px;
  font-size: 11px;
  line-height: 14px;
  font-weight: 700;
  letter-spacing: 0.5px;
  color: rgba(110, 110, 110, 0.08);
}

.wm-cloud {
  position: absolute;
  left: -120px;
  top: -15px;
  width: 50px;
  height: 44px;
  fill: none;
  stroke: rgba(110, 110, 110, 0.09);
  stroke-width: 5;
}
```

FILE: script.js
```js
// центры надписей водяного знака
const marks = [
  [180, 70], [429, 150], [180, 253], [424, 350], [188, 460], [461, 527], [175, 683], [427, 743], [175, 850],
  [681, 43], [954, 97], [693, 220], [966, 293], [722, 397], [946, 510], [681, 643], [923, 697], [684, 830], [949, 900],
  [1201, -14], [1211, 213], [1240, 375], [1195, 587], [1202, 793],
  [1466, 67], [1494, 250], [1441, 480], [1462, 653], [1488, 853],
  [1727, -25], [1745, 157], [1745, 350], [1747, 530], [1751, 737]
];

const cloud = '<svg class="wm-cloud" viewBox="0 0 50 44"><path d="M14 39 C6 38 3 32 3 27 C3 20 8 15 14 15 C16 8 22 3 29 3 C38 3 45 10 45 19 C45 29 38 34 30 39 H20" /></svg>';
const layer = document.getElementById('watermarks');

marks.forEach(m => {
  const el = document.createElement('div');
  el.className = 'wm';
  el.style.left = m[0] + 'px';
  el.style.top = m[1] + 'px';
  // надпись выше окна не видна, от такого знака остается только облако
  el.innerHTML = m[1] < 0 ? cloud : `<span class="wm-title">ОБЛАКО</span><span class="wm-sub">ДЛЯ ДЕЛОВЫХ ЛЮДЕЙ</span>${cloud}`;
  layer.appendChild(el);
});
```
